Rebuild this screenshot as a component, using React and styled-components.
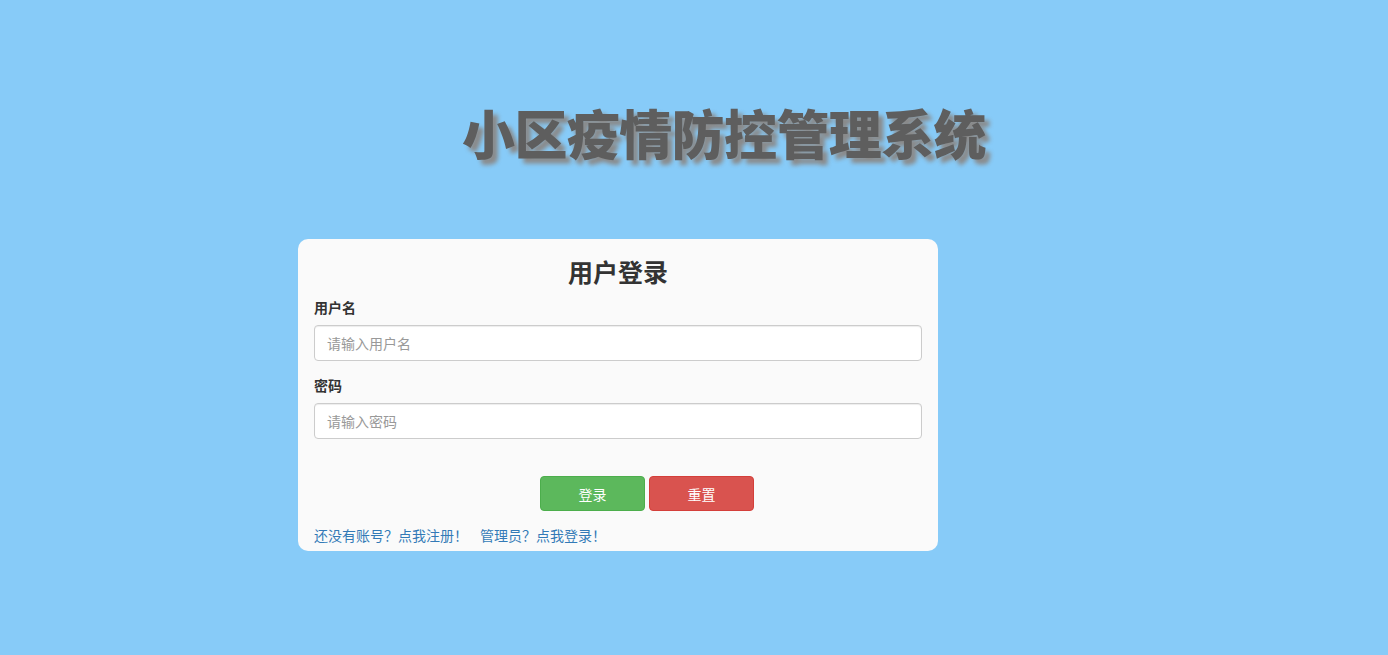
import React, { useState } from "react";
import styled, { createGlobalStyle } from "styled-components";

const GlobalStyle = createGlobalStyle`
  html, body {
    margin: 0;
    padding: 0;
    height: 100%;
  }
  body {
    background: #87cbf8;
    font-family: "Helvetica Neue", Helvetica, Arial, "Noto Sans CJK SC", sans-serif;
    font-size: 14px;
    color: #333;
  }
  * {
    box-sizing: border-box;
  }
`;

const Page = styled.div`
  width: 1388px;
  height: 655px;
  padding-top: 97px;
`;

const Title = styled.h1`
  margin: 0 0 0 462px;
  height: 70px;
  font-family: "Noto Sans CJK SC", sans-serif;
  font-size: 53px;
  line-height: 70px;
  font-weight: 900;
  letter-spacing: -0.6px;
  color: #5e5e5e;
  text-shadow: 5px 5px 4px #8a8a8a;
`;

const Card = styled.div`
  width: 640px;
  margin: 72px 0 0 298px;
  background: #fafafa;
  border-radius: 10px;
  padding: 15px 16px 6px;
`;

const CardTitle = styled.h3`
  margin: 0 0 9px;
  text-align: center;
  font-family: "Noto Sans CJK SC", sans-serif;
  font-size: 25px;
  line-height: 34px;
  font-weight: 700;
  color: #333;
`;

const Field = styled.div`
  margin-bottom: 14px;
`;

const Label = styled.label`
  display: block;
  margin-bottom: 8px;
  font-family: "Noto Sans CJK SC", sans-serif;
  font-size: 14px;
  line-height: 20px;
  font-weight: 700;
  color: #333;
`;

const Input = styled.input`
  display: block;
  width: 100%;
  height: 36px;
  padding: 6px 12px;
  font-family: "Noto Sans CJK SC", sans-serif;
  font-size: 14px;
  color: #555;
  background: #fff;
  border: 1px solid #ccc;
  border-radius: 4px;
  box-shadow: inset 0 1px 1px rgba(0, 0, 0, 0.075);
  outline: none;

  &::placeholder {
    color: #999;
  }
`;

const ButtonRow = styled.div`
  display: flex;
  gap: 4px;
  padding-left: 226px;
  margin-top: 37px;
`;

const Button = styled.button`
  width: 105px;
  height: 35px;
  font-family: "Noto Sans CJK SC", sans-serif;
  font-size: 14px;
  color: #fff;
  border-radius: 4px;
  cursor: pointer;
  background: ${(p) => (p.$variant === "danger" ? "#d9534f" : "#5cb85c")};
  border: 1px solid ${(p) => (p.$variant === "danger" ? "#d43f3a" : "#4cae4c")};
`;

const Links = styled.div`
  margin-top: 14px;
  font-family: "Noto Sans CJK SC", sans-serif;
  font-size: 14px;
  line-height: 20px;
  display: flex;
  gap: 12px;
`;

const Link = styled.a`
  color: #337ab7;
  text-decoration: none;
`;

export default function App() {
  const [form, setForm] = useState({ username: "", password: "" });

  const handleChange = (e) => {
    const { name, value } = e.target;
    setForm({ ...form, [name]: value });
  };

  return (
    <Page>
      <GlobalStyle />
      <Title>小区疫情防控管理系统</Title>
      <Card>
        <CardTitle>用户登录</CardTitle>
        <Field>
          <Label htmlFor="username">用户名</Label>
          <Input
            id="username"
            name="username"
            placeholder="请输入用户名"
            value={form.username}
            onChange={handleChange}
          />
        </Field>
        <Field>
          <Label htmlFor="password">密码</Label>
          <Input
            id="password"
            name="password"
            type="password"
            placeholder="请输入密码"
            value={form.password}
            onChange={handleChange}
          />
        </Field>
        <ButtonRow>
          <Button type="submit">登录</Button>
          <Button
            type="button"
            $variant="danger"
            onClick={() => setForm({ username: "", password: "" })}
          >
            重置
          </Button>
        </ButtonRow>
        <Links>
          <Link href="#">还没有账号？点我注册！</Link>
          <Link href="#">管理员？点我登录！</Link>
        </Links>
      </Card>
    </Page>
  );
}
